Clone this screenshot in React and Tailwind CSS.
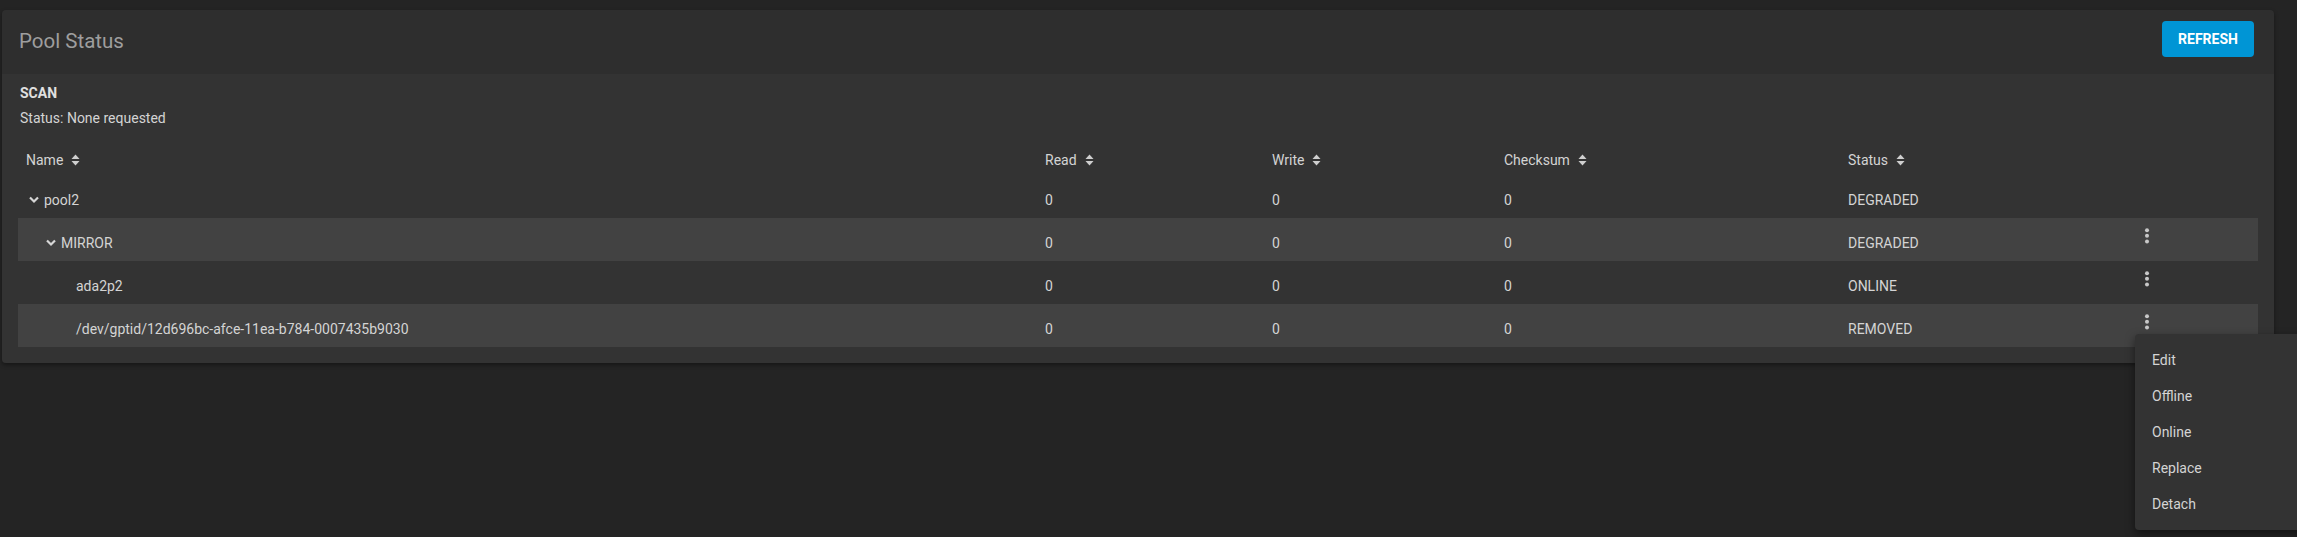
import { Fragment } from "react";

const COLS = "grid grid-cols-[1019px_227px_232px_344px_295px_1fr]";

const ROWS = [
  { name: "pool2", depth: 0, expand: true, status: "DEGRADED", menu: false },
  { name: "MIRROR", depth: 1, expand: true, status: "DEGRADED", menu: true },
  { name: "ada2p2", depth: 2, status: "ONLINE", menu: true },
  {
    name: "/dev/gptid/12d696bc-afce-11ea-b784-0007435b9030",
    depth: 2,
    status: "REMOVED",
    menu: true,
  },
];

const MENU = ["Edit", "Offline", "Online", "Replace", "Detach"];

function SortIcon() {
  return (
    <svg width="9" height="12" viewBox="0 0 9 12" className="ml-[8px]">
      <path d="M4.5 0.5 L8.5 5 H0.5 Z" fill="#cfcfcf" />
      <path d="M4.5 11.5 L8.5 7 H0.5 Z" fill="#cfcfcf" />
    </svg>
  );
}

function Chevron() {
  return (
    <svg width="10" height="8" viewBox="0 0 10 8" className="mr-[5px]">
      <path
        d="M1 1.5 L5 5.5 L9 1.5"
        fill="none"
        stroke="#d6d6d6"
        strokeWidth="2.2"
      />
    </svg>
  );
}

function Kebab() {
  return (
    <svg width="6" height="16" viewBox="0 0 6 16">
      <circle cx="3" cy="2.2" r="2" fill="#c8c8c8" />
      <circle cx="3" cy="7.8" r="2" fill="#c8c8c8" />
      <circle cx="3" cy="13.4" r="2" fill="#c8c8c8" />
    </svg>
  );
}

function Header({ label }) {
  return (
    <div className="flex items-center pl-[8px]">
      {label}
      <SortIcon />
    </div>
  );
}

function Row({ row, striped }) {
  const indent = ["pl-[11px]", "pl-[28px]", "pl-[58px]"][row.depth];
  return (
    <div
      className={`${COLS} h-[43px] pt-[7px] items-center ${
        striped ? "bg-[#424242]" : ""
      }`}
    >
      <div className={`flex items-center ${indent}`}>
        {row.expand && <Chevron />}
        {row.name}
      </div>
      <div className="pl-[8px]">0</div>
      <div className="pl-[8px]">0</div>
      <div className="pl-[8px]">0</div>
      <div className="pl-[8px]">{row.status}</div>
      <div className="self-start pt-[3px] pl-[9px]">
        {row.menu && <Kebab />}
      </div>
    </div>
  );
}

export default function App() {
  return (
    <div
      className="relative w-[2297px] h-[537px] overflow-hidden bg-[#242424] text-[#d4d4d4] text-[14px]"
      style={{ fontFamily: "Roboto, 'Liberation Sans', sans-serif" }}
    >
      <div className="ml-[2px] mt-[10px] w-[2272px] rounded-[4px] overflow-hidden shadow-[0_2px_4px_rgba(0,0,0,0.4)]">
        <div className="flex items-center justify-between h-[64px] bg-[#2e2e2e] pl-[17px] pr-[20px]">
          <h1 className="text-[20.5px] text-[#9e9e9e] leading-none -mt-[2px]">
            Pool Status
          </h1>
          <button className="w-[92px] h-[36px] rounded-[4px] bg-[#0095d5] text-white text-[14px] font-bold -mt-[6px]">
            REFRESH
          </button>
        </div>
        <div className="bg-[#333333] px-[16px] pt-[11px] pb-[16px]">
          <div className="pl-[2px] font-bold leading-[16px] text-[#e0e0e0]">
            SCAN
          </div>
          <div className="pl-[2px] mt-[9px] leading-[16px]">
            Status: None requested
          </div>
          <div className="mt-[14px]">
            <div className={`${COLS} h-[35px] pt-[5px] items-center`}>
              <Header label="Name" />
              <Header label="Read" />
              <Header label="Write" />
              <Header label="Checksum" />
              <Header label="Status" />
              <div />
            </div>
            {ROWS.map((row, i) => (
              <Fragment key={row.name}>
                <Row row={row} striped={i % 2 === 1} />
              </Fragment>
            ))}
          </div>
        </div>
      </div>

      <div className="absolute left-[2135px] top-[334px] w-[200px] py-[8px] rounded-[4px] bg-[#333333] shadow-[0_4px_10px_rgba(0,0,0,0.5)]">
        {MENU.map((item) => (
          <div key={item} className="h-[36px] flex items-center pl-[17px]">
            {item}
          </div>
        ))}
      </div>
    </div>
  );
}
